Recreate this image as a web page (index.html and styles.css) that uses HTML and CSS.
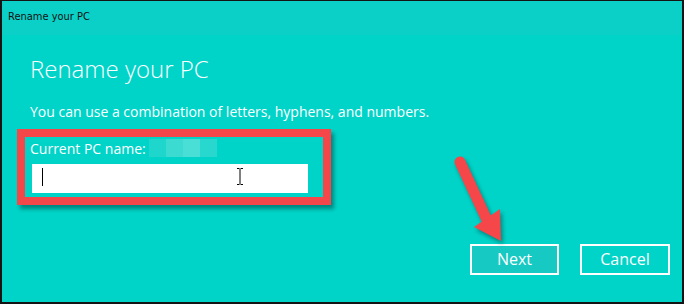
FILE: index.html
```html
<!DOCTYPE html>
<html lang="en">
<head>
    <meta charset="UTF-8">
    <meta name="viewport" content="width=device-width, initial-scale=1.0">
    <title>Rename your PC</title>
    <link rel="stylesheet" href="styles.css">
</head>
<body>
    <div class="window">
        <div class="titlebar">Rename your PC</div>
        <div class="content">
            <h1 class="heading">Rename your PC</h1>
            <p class="hint">You can use a combination of letters, hyphens, and numbers.</p>
            <div class="name-box">
                <div class="current-name">
                    <span>Current PC name:</span>
                    <span class="blurred">
                        <i></i><i></i><i></i><i></i>
                    </span>
                </div>
                <div class="name-input">
                    <span class="caret"></span>
                    <svg class="ibeam" width="8" height="17" viewBox="0 0 8 17">
                        <path d="M1 0.5h2.5M4.5 0.5h2.5M4 1v15M1 16.5h2.5M4.5 16.5h2.5" stroke="#000" stroke-width="1" fill="none"/>
                    </svg>
                </div>
            </div>
            <div class="buttons">
                <button class="btn btn-next">Next</button>
                <button class="btn">Cancel</button>
            </div>
        </div>
        <!-- flecha de anotacion -->
        <svg class="arrow" width="80" height="120" viewBox="0 0 80 120">
            <line x1="20" y1="22" x2="47" y2="80" stroke="#f5474a" stroke-width="11" stroke-linecap="round"/>
            <polygon points="34,87 60,69 61,101" fill="#f5474a"/>
        </svg>
    </div>
</body>
</html>
```

FILE: styles.css
```css
body {
    margin: 0;
    padding: 0;
    font-family: "Open Sans", "Noto Sans", sans-serif;
    background-color: #00d4c8;
}
.window {
    position: relative;
    width: 684px;
    height: 304px;
    box-sizing: border-box;
    border: 2px solid #141414;
    border-top-width: 1px;
    background-color: #00d4c8;
    overflow: hidden;
}
.titlebar {
    height: 34px;
    padding-left: 6px;
    padding-top: 9px;
    box-sizing: border-box;
    font-family: "DejaVu Sans Condensed", "DejaVu Sans", sans-serif;
    font-size: 11px;
    color: #111;
    background-color: #0bd0c7;
}
.content {
    padding-left: 15px;
    padding-right: 12px;
    display: flex;
    flex-direction: column;
}
.heading {
    margin: 18px 0 0 13px;
    font-size: 24px;
    font-weight: 300;
    color: #fff;
    line-height: 32px;
}
.hint {
    margin: 17px 0 0 13px;
    font-size: 14px;
    color: #fff;
    line-height: 20px;
}
.name-box {
    margin-top: 7px;
    width: 298px;
    height: 60px;
    border: 8px solid #f5474a;
    box-shadow: 3px 4px 4px rgba(0, 40, 40, 0.45);
}
.current-name {
    display: flex;
    align-items: center;
    height: 20px;
    margin-top: 1px;
    padding-left: 5px;
    font-size: 14px;
    color: #fff;
}
.blurred {
    display: flex;
    margin-left: 3px;
    height: 18px;
}
.blurred i {
    display: block;
    width: 17px;
    height: 18px;
    background-color: #1fd6cc;
}
.blurred i:nth-child(2) {
    background-color: #3cdbd2;
}
.blurred i:nth-child(3) {
    background-color: #4adfd6;
}
.blurred i:nth-child(4) {
    background-color: #28d8ce;
}
.name-input {
    position: relative;
    margin: 6px 0 0 7px;
    width: 276px;
    height: 29px;
    background-color: #fff;
}
.caret {
    position: absolute;
    left: 10px;
    top: 4px;
    width: 1px;
    height: 18px;
    background-color: #000;
}
.ibeam {
    position: absolute;
    left: 204px;
    top: 4px;
}
.buttons {
    display: flex;
    justify-content: flex-end;
    gap: 21px;
    margin-top: 39px;
}
.btn {
    width: 90px;
    height: 31px;
    border: 2px solid #fff;
    background-color: transparent;
    color: #fff;
    font-family: "Open Sans", "Noto Sans", sans-serif;
    font-size: 16px;
    padding: 0 0 1px;
}
.btn-next {
    width: 89px;
    background-color: #16cac3;
}
.arrow {
    position: absolute;
    left: 438px;
    top: 139px;
    filter: drop-shadow(2px 3px 2px rgba(0, 40, 40, 0.45));
}
```
